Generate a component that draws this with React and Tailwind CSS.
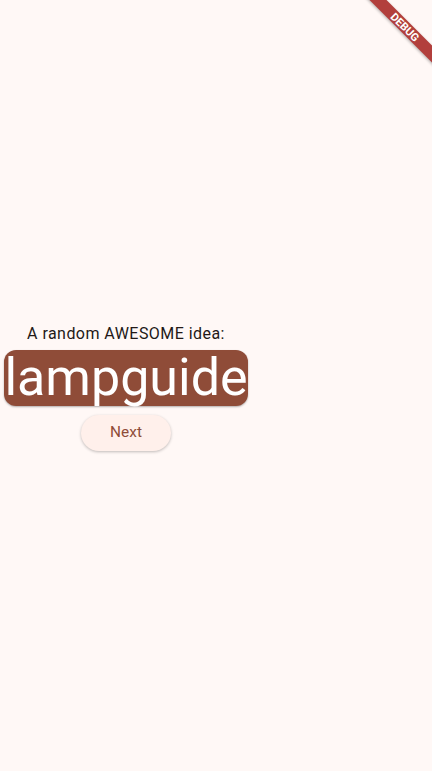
export default function App() {
  return (
    <div
      className="relative w-[432px] h-[771px] overflow-hidden bg-[#fff8f6] flex flex-col justify-center"
      style={{ fontFamily: 'Roboto, "Liberation Sans", sans-serif' }}
    >
      {/* column sits at the left, children centred within it */}
      <div className="mt-[9px] w-[252px] flex flex-col items-center">
        <p className="text-[16px] leading-[24px] text-[#231917] tracking-[0.45px]">A random AWESOME idea:</p>
        <div className="m-[4px] w-[244px] h-[56px] rounded-[12px] bg-[#8f4c38] shadow-[0_1px_2px_rgba(0,0,0,0.3)] flex items-center justify-center">
          <span className="text-[52px] leading-[56px] text-white whitespace-nowrap">lampguide</span>
        </div>
        <div className="pt-[5px] pb-[7px]">
          <button className="h-[36px] w-[90px] rounded-full bg-[#fff0eb] text-[#8f4c38] text-[15.4px] font-normal tracking-[0.1px] leading-none shadow-[0_1px_3px_rgba(0,0,0,0.25)]">
            Next
          </button>
        </div>
      </div>

      {/* debug banner */}
      <div className="absolute left-[345px] top-[21px] w-[120px] h-[12px] rotate-45 bg-[#b23f3c] shadow-[0_1px_3px_rgba(0,0,0,0.3)] flex items-center justify-center">
        <span className="text-[11px] leading-none font-bold text-white">DEBUG</span>
      </div>
    </div>
  );
}
